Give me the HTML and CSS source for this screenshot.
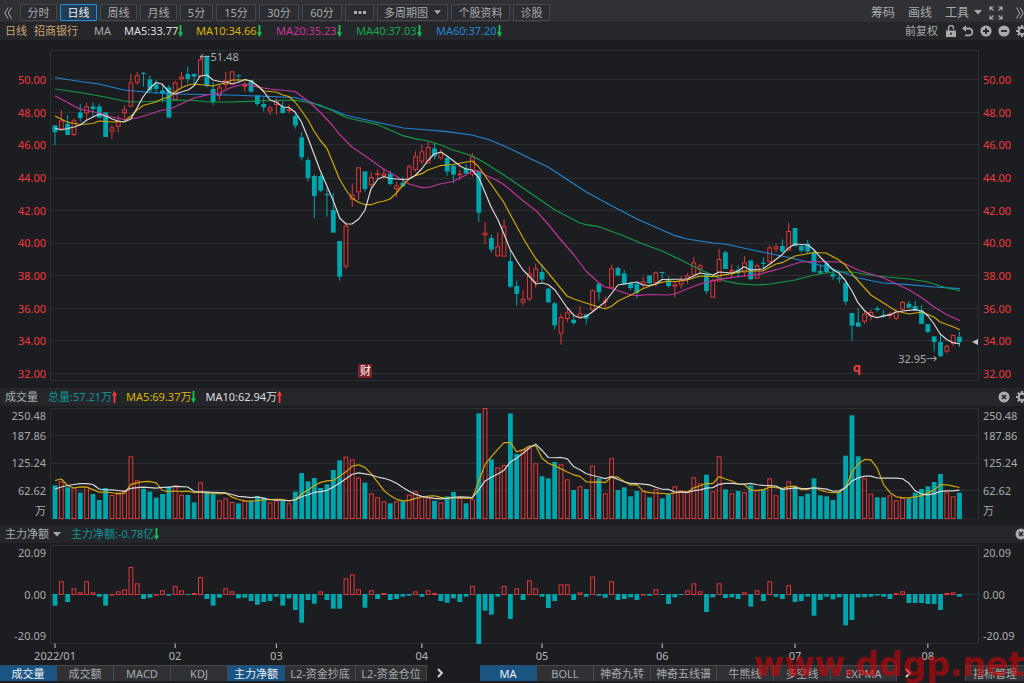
FILE: index.html
```html
<!DOCTYPE html>
<html lang="zh-CN">
<head>
<meta charset="utf-8">
<meta name="viewport" content="width=device-width, initial-scale=1">
<title>招商银行 日线</title>
<link rel="stylesheet" href="styles.css">
</head>
<body>
<svg class="defs" width="0" height="0" aria-hidden="true">
  <symbol id="up" viewBox="0 0 5 12"><path d="M2.5 0L5 4.5H3.4V12H1.6V4.500H0z" fill="#ff3b3b"/></symbol>
  <symbol id="down" viewBox="0 0 5 12"><path d="M2.500 12L5 7.500H3.400V0H1.600V7.500H0z" fill="#12c850"/></symbol>
  <symbol id="caret" viewBox="0 0 8 5"><path d="M0 0h8L4 4.500z" fill="currentColor"/></symbol>
  <symbol id="gear" viewBox="0 0 12 12"><circle cx="6" cy="6" r="3.300" fill="none" stroke="currentColor" stroke-width="2.200"/><path d="M6 0v2.500M6 9.500V12M0 6h2.500M9.500 6H12M1.800 1.800l1.700 1.700M8.500 8.500l1.700 1.700M10.200 1.800L8.500 3.500M3.500 8.500l-1.700 1.700" stroke="currentColor" stroke-width="2.200"/></symbol>
  <symbol id="close" viewBox="0 0 12 12"><circle cx="6" cy="6" r="5.500" fill="currentColor"/><path d="M4 4l4 4M8 4L4 8" stroke="#25262a" stroke-width="1.700"/></symbol>
</svg>

<header class="toolbar">
  <button class="bare" aria-label="收起"><svg width="8" height="12" viewBox="0 0 8 12"><path d="M4 .5L.8 6 4 11.500M7.500 .5L4.300 6l3.200 5.500" fill="none" stroke="currentColor"/></svg></button>
  <nav class="periods">
    <button>分时</button><button class="on">日线</button><button>周线</button><button>月线</button><button class="short">5分</button><button class="mid">15分</button><button class="mid">30分</button><button class="mid">60分</button><button class="dots" aria-label="更多"><svg width="12" height="3" viewBox="0 0 12 3"><path d="M0 0h3v3H0zM4.500 0h3v3h-3zM9 0h3v3H9z" fill="currentColor"/></svg></button><button class="multi" aria-haspopup="true">多周期图<svg width="7" height="5"><use href="#caret"/></svg></button><button class="info">个股资料</button><button>诊股</button>
  </nav>
  <div class="tools">
    <button class="bare">筹码</button><button class="bare">画线</button><button class="bare" aria-haspopup="true">工具<svg class="after" width="8" height="5"><use href="#caret"/></svg></button>
    <button class="bare expand" aria-label="全屏"><svg width="14" height="14" viewBox="0 0 14 14"><path d="M1 4.500V1h3.500M9.500 1H13v3.500M13 9.500V13H9.500M4.500 13H1V9.500M1 1l3.500 3.500M13 1L9.500 4.500M13 13L9.500 9.500M1 13l3.500-3.500" fill="none" stroke="currentColor" stroke-width="1.200"/></svg></button>
    <button class="bare" aria-label="展开"><svg width="8" height="12" viewBox="0 0 8 12"><path d="M.5 .5L3.700 6 .5 11.500M4 .5L7.200 6 4 11.500" fill="none" stroke="currentColor"/></svg></button>
  </div>
</header>

<section class="bar quote">
  <span class="tan">日线</span><span class="tan name">招商银行</span><span class="malabel">MA</span>
  <span class="ma first white">MA5:33.77<svg width="5" height="12"><use href="#down"/></svg></span>
  <span class="ma yellow">MA10:34.66<svg width="5" height="12"><use href="#down"/></svg></span>
  <span class="ma pink">MA20:35.23<svg width="5" height="12"><use href="#down"/></svg></span>
  <span class="ma green">MA40:37.03<svg width="5" height="12"><use href="#down"/></svg></span>
  <span class="ma blue">MA60:37.20<svg width="5" height="12"><use href="#down"/></svg></span>
  <div class="icons quote-icons">
    <button class="bare small">前复权</button>
    <button class="bare" aria-label="锁定"><svg width="10" height="12" viewBox="0 0 10 12"><path d="M2.500 6V3a2.500 2.500 0 0 1 5 0v1.200" fill="none" stroke="currentColor" stroke-width="1.400"/><path d="M0 5.500h10V12H0z" fill="currentColor"/><path d="M4.300 7.500h1.400v2.500H4.300z" fill="#25262a"/></svg></button>
    <button class="bare" aria-label="撤销"><svg width="12" height="12" viewBox="0 0 12 12"><path d="M2 3.500h5a3.300 3.300 0 0 1 0 6.800H3" fill="none" stroke="currentColor" stroke-width="1.800"/><path d="M0 3.500L4 .3v6.400z" fill="currentColor"/></svg></button>
    <button class="bare" aria-label="放大"><svg width="12" height="12" viewBox="0 0 12 12"><circle cx="6" cy="6" r="5.600" fill="currentColor"/><path d="M3 6h6M6 3v6" stroke="#25262a" stroke-width="1.800"/></svg></button>
    <button class="bare" aria-label="缩小"><svg width="12" height="12" viewBox="0 0 12 12"><circle cx="6" cy="6" r="5.600" fill="currentColor"/><path d="M3 6h6" stroke="#25262a" stroke-width="1.800"/></svg></button>
    <button class="bare" aria-label="设置"><svg width="12" height="12"><use href="#gear"/></svg></button>
  </div>
</section>

<section class="pane price">
  <div class="scale red"><span>50.00</span><span>48.00</span><span>46.00</span><span>44.00</span><span>42.00</span><span>40.00</span><span>38.00</span><span>36.00</span><span>34.00</span><span>32.00</span></div>
  <div class="plot">
    <svg id="price" viewBox="50 40 929 348" preserveAspectRatio="none"></svg>
    <span class="note high">←51.48</span>
    <span class="note low">32.95→</span>
    <span class="note cai">财</span>
    <span class="note q">q</span>
  </div>
  <div class="scale red right"><span>50.00</span><span>48.00</span><span>46.00</span><span>44.00</span><span>42.00</span><span>40.00</span><span>38.00</span><span>36.00</span><span>34.00</span><span>32.00</span></div>
</section>

<section class="bar volume-bar">
  <span>成交量</span>
  <span class="teal">总量:57.21万<svg width="5" height="12"><use href="#up"/></svg></span>
  <span class="yellow">MA5:69.37万<svg width="5" height="12"><use href="#down"/></svg></span>
  <span class="white">MA10:62.94万<svg width="5" height="12"><use href="#up"/></svg></span>
  <div class="icons"><button class="bare" aria-label="关闭"><svg width="12" height="12"><use href="#close"/></svg></button><button class="bare" aria-label="设置"><svg width="12" height="12"><use href="#gear"/></svg></button></div>
</section>

<section class="pane volume">
  <div class="scale"><span>250.48</span><span>187.86</span><span>125.24</span><span>62.62</span><span>万</span></div>
  <div class="plot"><svg id="volume" viewBox="50 406 929 119" preserveAspectRatio="none"></svg></div>
  <div class="scale right"><span>250.48</span><span>187.86</span><span>125.24</span><span>62.62</span><span>万</span></div>
</section>

<section class="bar flow-bar">
  <label class="pick"><select aria-label="指标"><option>主力净额</option></select><svg width="8" height="5"><use href="#caret"/></svg></label>
  <span class="teal">主力净额:-0.78亿<svg width="5" height="12"><use href="#down"/></svg></span>
  <div class="icons"><button class="bare" aria-label="关闭"><svg width="12" height="12"><use href="#close"/></svg></button></div>
</section>

<section class="pane flow">
  <div class="scale"><span>20.09</span><span>0.00</span><span>-20.09</span></div>
  <div class="plot"><svg id="flow" viewBox="50 543 929 105" preserveAspectRatio="none"></svg></div>
  <div class="scale right"><span>20.09</span><span>0.00</span><span>-20.09</span></div>
</section>

<div class="months"><div class="plot" id="months"></div></div>

<footer class="tabs">
  <button class="on">成交量</button><button>成交额</button><button>MACD</button><button>KDJ</button><button class="on">主力净额</button><button class="wide">L2-资金抄底</button><button class="wide">L2-资金仓位</button>
  <button class="more" aria-label="更多指标"><svg width="6" height="10" viewBox="0 0 6 10"><path d="M1 1l3.800 4L1 9" fill="none" stroke="currentColor" stroke-width="2"/></svg></button>
  <button class="on main">MA</button><button>BOLL</button><button>神奇九转</button><button class="five">神奇五线谱</button><button>牛熊线</button><button>多空线</button><button class="five">EXPMA</button>
  <button class="more narrow" aria-label="更多主图指标"><svg width="6" height="10" viewBox="0 0 6 10"><path d="M1 1l3.800 4L1 9" fill="none" stroke="currentColor" stroke-width="2"/></svg></button>
  <button class="manage">指标管理</button>
</footer>
<div class="watermark">www.ddgp.net</div>
<script src="chart.js"></script>
</body>
</html>
```
FILE: styles.css
```css
* { box-sizing: border-box; }
body {
  margin: 0;
  min-height: 100vh;
  display: flex;
  flex-direction: column;
  position: relative;
  overflow: hidden;
  background: #1c1d20;
  color: #a9aaac;
  font: 11px/16px "Noto Sans", "Noto Sans CJK SC", sans-serif;
}
button, select { font: inherit; color: inherit; margin: 0; white-space: nowrap; }
svg { flex: none; }
.defs { position: absolute; }
.bare { display: flex; align-items: center; border: 0; padding: 0; background: none; }

.toolbar {
  flex: none;
  height: 22px;
  padding: 3px 0 0 4px;
  display: flex;
  align-items: center;
  background: #303135;
  overflow: hidden;
}
.periods { display: flex; gap: 3px; margin-left: 8px; }
.periods button {
  display: flex;
  align-items: center;
  justify-content: center;
  gap: 6px;
  width: 37px;
  height: 17px;
  padding: 0;
  border: 1px solid #47484c;
  border-radius: 1px;
  background: #2c2d31;
  line-height: 15px;
}
.periods .short { width: 33px; }
.periods .mid { width: 40px; }
.periods .dots { width: 29px; }
.periods .multi { width: 71px; }
.periods .info { width: 59px; }
.periods .on { border-color: #2090e8; background: #233c52; color: #f0f0f0; }
.tools {
  margin: 0 0 0 auto;
  display: flex;
  gap: 13px;
  font-size: 12px;
}
.after { margin-left: 5px; }
.expand { margin-left: -6px; }

.bar {
  flex: none;
  height: 18px;
  display: flex;
  align-items: center;
  background: #25262a;
  padding-left: 5px;
  overflow: hidden;
  white-space: nowrap;
}
.bar span, .ma { display: flex; align-items: center; }
.tan { color: #cfa26c; }
.white { color: #dedede; }
.yellow { color: #dcb400; }
.pink { color: #cc3399; }
.green { color: #16a84c; }
.blue { color: #2088d8; }
.teal { color: #0d969c; }
.name { margin-left: 7px; }
.malabel { width: 30px; margin-left: 16px; }
.ma { width: 80px; }
.ma.first { width: 72px; }
.icons { margin: 0 -4px 0 auto; display: flex; gap: 6px; }
.icons .small { margin-right: 2px; }
.volume-bar { gap: 9px; }
.volume-bar .teal { margin-left: 1px; }
.flow-bar { gap: 10px; }
.flow-bar .icons { margin-right: -3px; }
.pick { display: flex; align-items: center; gap: 4px; }
.pick select { appearance: none; border: 0; padding: 0; background: none; width: 44px; height: 16px; }

.pane { display: grid; grid-template-columns: 50px 1fr 45px; min-height: 0; }
.price { flex: 348 1 0; min-height: 200px; }
.volume { flex: 119 1 0; min-height: 110px; }
.flow { flex: 105 1 0; min-height: 90px; }
.scale {
  display: flex;
  flex-direction: column;
  justify-content: space-between;
  text-align: right;
  padding-right: 4px;
}
.scale.right { text-align: left; padding: 0 0 0 4px; }
.red { color: #f23a3e; }
.price .scale { padding-top: 32px; padding-bottom: 6px; }
.volume .scale {
  display: grid;
  grid-template-columns: 1fr;
  grid-template-rows: 20fr 20fr 34fr 21fr 20fr 4fr;
  align-items: center;
}
.flow .scale { padding-top: 2px; padding-bottom: 4px; }
.plot { position: relative; }
.plot > svg { position: absolute; width: 100%; height: 100%; }
.note { position: absolute; white-space: nowrap; }
.high { left: 16.1%; top: 2.6%; }
.low { left: 91.3%; top: 89.4%; }
.cai {
  left: 33.2%;
  top: 93.2%;
  width: 14px;
  height: 14px;
  line-height: 14px;
  text-align: center;
  color: #fff;
  background: #7c2226;
}
.q { left: 86.4%; top: 91.8%; color: #f03a3a; font-size: 13px; font-weight: 700; }

.months { flex: none; height: 17px; padding: 0 45px 0 50px; color: #b4b5b7; }
.months span { position: absolute; transform: translateX(-50%); }

.tabs {
  flex: none;
  height: 18px;
  padding-bottom: 2px;
  display: flex;
  background: #1c1d20;
}
.tabs button {
  flex: none;
  width: 57px;
  padding: 0;
  border: 0;
  border-top: 1px solid #48494d;
  border-right: 1px solid #48494d;
  background: #303135;
  line-height: 15px;
}
.tabs .wide { width: 71px; }
.tabs .five { width: 66px; }
.tabs .on { background: #1a5482; border-color: #30506a; color: #f0f0f0; }
.tabs .more { width: 26px; border: 0; background: none; color: #d0d0d0; }
.tabs .main { margin-left: 27px; }
.tabs .narrow { width: 22px; }
.tabs .manage { width: 59px; margin-left: auto; border-left: 1px solid #48494d; border-right: 0; }

.watermark {
  position: absolute;
  right: 0;
  bottom: -1px;
  font: 700 33px/38px "DejaVu Sans", sans-serif;
  color: rgba(205, 5, 10, .62);
  pointer-events: none;
}
```
FILE: chart.js
```js
const RED = '#e0383a', TEAL = '#00a6ae', GRID = '#2e2f33';
const FIRST = 55, STEP = 6.325;
const cx = i => FIRST + STEP * i;

// Each block: top offset, then rows "colour high,open/close top,bottom,low" in thirds of a unit.
const blocks = [
[50, 'T226,226,247,285 R180,211,238,238 T195,221,255,255 R205,211,255,258 T163,187,204,215 R158,169,190,213 T157,169,177,200 T160,169,203,205 T187,187,261,261 R225,232,245,266 R196,213,230,247 R166,178,190,205 R71,97,170,170 R66,76,98,104 T66,69,72,110 T77,88,122,128 T90,103,117,131 T105,121,130,157 T105,112,203,203 R92,97,150,150 R66,80,88,117 T50,72,87,100 T70,72,80,106 R17,28,82,82 T17,17,106,112 T96,117,156,165 R105,112,138,150 R66,91,105,117 R62,64,103,103 T73,76,79,97'],
[70, 'R36,44,50,64 T30,30,65,68 T76,76,102,108 T84,102,112,125 R107,112,124,135 R83,91,105,133 T95,110,129,131 R104,118,123,130 T125,138,167,176 T187,202,262,272 T262,270,324,334 T313,318,378,444 T312,318,362,366 T355,372,376,440 T370,420,488,488 T513,513,620,632 R457,467,590,596 R340,374,389,411 R292,292,367,390 T304,304,357,365 R308,321,346,356 R299,310,313,327 R295,310,318,328 T302,311,342,347 R335,346,357,381 T320,338,349,351 R284,289,326,330 R244,259,300,305 R225,244,275,283 R214,231,281,281 T218,235,259,268 R238,247,265,270 T258,264,305,317 T283,287,314,340 R299,311,314,330 T282,294,311,311 R249,259,314,320 T304,304,428,455 R456,488,496,522'],
[150, 'T254,264,299,308 R248,289,319,321 R208,229,320,320 T298,333,410,414 T392,408,432,467 R420,447,458,467 R349,370,448,452 R341,355,396,413 T342,366,389,400 T414,416,457,459 T456,460,526,538 R491,501,551,584 R474,487,507,516 T496,509,519,524 R468,490,502,502 T492,493,506,524 R418,421,481,487 T397,401,427,452 R440,451,456,474 R343,355,415,415 T350,354,377,378 T360,370,404,404 T395,399,414,420 T397,401,429,445 R381,394,404,414 T376,376,400,402 R364,367,399,410 T365,366,369,386 T380,391,408,413 R398,403,410,443 R378,388,404,416 R369,377,389,401 R321,337,376,376 R341,346,358,370 T372,373,423,432 R387,390,443,444 R297,327,395,395 T302,307,357,357'],
[210, 'R163,180,183,206 T165,179,189,203 R138,157,188,200 T149,152,208,210 R161,166,206,206 T142,158,162,178 R106,112,157,161 R101,109,118,126 T88,108,125,128 R38,63,121,124 T54,54,109,109 T102,108,122,128 T90,101,125,130 T118,126,185,189 T162,183,190,191 T155,160,186,190 T180,192,200,209 T187,203,208,219 T210,218,275,285 T309,309,347,392 T294,337,350,350 R302,311,335,342 R299,306,319,331 T288,295,300,305 T300,314,318,323 R305,312,318,326 R297,305,326,330 R273,276,299,302 T273,281,293,295 T272,288,302,302 T285,302,342,342 T342,342,366,369 T379,379,396,424 T375,396,439,441 R404,408,425,430 R374,375,401,409 T366,380,397,410']
];
const candles = blocks.flatMap(([top, rows]) => rows.split(' ').map(r => ({
  up: r[0] === 'R', y: r.slice(1).split(',').map(v => top + v / 3)
})));

const averages = {
'#1f86d6': '55,77.5 80,81.5 99,84 124,90 150,92.5 175,94 230,95 295,97.5 308,101 320,106 333,110 345,115 371,121 390,125 403,128 422,129.5 447,131.7 472,135 490,140 513,150 529,158 548,167 586,191.7 612,206 637,219 675,235.7 687,239 713,243 725,244 757,251 782,256 808,262 833,269 858,278 883,283 909,284.7 934,287 960,288.7',
'#149a48': '55,89 80,92.5 105,97 124,101 135,102 150,101.5 175,100 194,100.5 210,102 230,102 258,101 295,100 320,105 333,111 345,117 352,119 378,124.7 403,135.7 415,138.7 428,141 441,145 453,150 472,155.7 485,163 504,175 523,188 555,210 580,223 586,224.7 599,226.7 624,236 643,244 662,251 681,260 700,269.7 713,275 725,281 738,283.7 757,285 770,284 795,280 814,275 833,272 852,272 877,276 909,279 928,282 940,286 960,291',
'#c2349b': '55,96 61,99 74,106 80,109 87,110.5 99,113 112,117 124,119.5 137,118 150,114 162,110 169,109.5 181,104 194,98 207,95 220,93 232,87 245,84 258,87 270,89 295,91.5 308,101 320,112 333,126 339,134 352,147 371,160 384,169.5 396,176 409,184 422,187.7 428,187.5 440,184 453,181.5 466,175 472,171 478,170.7 485,174.7 498,181 504,184.7 523,200.7 536,210.7 548,224 561,240 574,255 586,271 599,283 605,287 612,288.7 631,295 637,295.7 649,294.5 668,295 675,294 687,289 700,284 713,280.7 730,277.7 744,276 757,274.7 776,269.7 789,265.7 801,262 814,261.5 839,262 845,263.7 858,270 883,277.7 909,289.7 922,298 934,307 947,314.7 960,320.7',
'#cfa80a': '55,116 61,119 67,122 80,124.5 93,123.5 99,121 112,122 124,121.5 131,116 137,110 143,105.5 156,102 162,99 169,97 175,92 181,88 188,85 194,84 213,86 220,84 226,83 232,80 245,80 251,81 264,91 276,92 283,95 289,96.5 295,102 301,110 308,120 314,131 320,140 327,148.5 333,163 339,178 346,190 352,198 358,202 365,204.7 371,204.7 377,202.5 384,201 390,199 396,193.5 403,185 409,179 415,175.7 422,173.7 428,170 440,165.7 453,164.5 472,161 478,166 485,175.7 498,194 504,202.7 510,214 523,237.7 529,248 536,259 548,272.7 567,296 574,299 586,303 605,309 612,306 618,301 631,295 643,288.7 656,283.7 668,281 675,281.7 687,280 700,276 713,276.7 732,273.7 744,271 763,271 776,264 782,262.7 795,256 814,252.5 826,253 839,260 845,264.7 852,274 871,295 896,311 909,314 922,312 934,317 940,322 953,326.7 960,329.7',
'#d8d8d8': '55,128 61,130 74,127 80,125 87,120 93,117 99,114 106,116 112,119 118,121 124,122 131,119 137,108 143,97 150,88 156,82.5 162,84 169,92 175,94 181,92 188,90 194,86 200,76 207,75 213,80 220,81.5 226,82 232,84 239,82 245,79.5 251,81 258,86 264,92 270,100 276,102 283,107 289,107.5 295,112 301,121 308,138 320,170 333,200 339.7,218 346,224 352,224 358.7,219 365,210 371,189 378,179 384,176.5 390,178.5 403,179.5 409,179 415,175.5 422,168.5 428,160.5 434,154 441,152 447,156 453,160.5 460,166 466,169 472,170 479,178 491,206.7 498,220 504,234 510,249 517,261 523,270 529,276 536,284 542,283 548,284.5 555,290 567,307.5 574,315.5 580,318 586,316.5 593,311.5 605,302 618,285 637,282 643,285 649,285.5 656,284 662,279.5 687,279 700,273 713,275 719,272 732,273 738,271 744,266.7 751,270 763,269 770,264 782,254.7 789,247.7 795,244 808,245 814,249.7 820,257 833,269.7 839,273 845,280 852,291 858,302.7 864,310 871,316 877,317.7 890,314.7 896,312 903,311 915,309.7 922,311 928,316 934,324 940,333.7 947,339.7 953,342.7 960,344'
};

const volume = '301 289 307 308 323 305 327 345 309 330 322 316 214 286 311 320 338 327 304 301 329 330 352 292 320 325 346 340 351 355 347 348 334 337 352 346 348 355 320 264 289 279 309 298 255 226 215 223 278 293 325 337 349 355 349 349 329 319 334 334 347 352 334 321 339 355 343 85 69 223 247 240 85 207 194 190 235 274 280 231 238 283 315 304 312 242 280 325 220 315 307 334 318 319 337 312 340 327 304 316 319 277 295 269 319 214 313 325 318 322 301 316 313 280 331 312 289 305 334 326 280 331 334 345 320 212 91 214 280 326 337 337 331 346 339 340 323 312 304 291 267 322 334 323'.split(' ').map(v => 385 + v / 3);

const flow = '242 169 231 190 202 169 202 215 242 207 199 193 126 175 222 218 207 196 212 183 196 209 204 156 222 242 218 190 199 220 218 228 239 231 228 215 242 220 255 293 225 236 199 225 251 251 160 148 193 248 196 222 204 225 222 215 212 199 215 196 204 228 233 220 231 215 183 357 257 269 215 183 282 190 225 166 190 215 249 228 178 178 225 202 215 155 212 218 169 225 222 217 225 207 212 193 209 237 217 209 196 175 199 261 217 175 219 217 222 202 245 196 228 169 215 222 181 231 228 215 272 225 215 223 217 301 285 217 217 215 212 215 222 204 199 234 234 234 237 237 255 204 202 215'.split(' ').map(v => 525 + v / 3);

const line = (x1, y1, x2, y2, c) => `<path d="M${x1} ${y1}L${x2} ${y2}" stroke="${c}"/>`;
const poly = (pts, c) => `<polyline points="${pts}" fill="none" stroke="${c}" stroke-width="1.2" stroke-linejoin="round"/>`;
const frame = (y, h) => `<rect x="50.5" y="${y}" width="928" height="${h}" fill="none" stroke="${GRID}"/>`;
const bar = (x, top, bottom, up) => up
  ? `<rect x="${x - 1.9}" y="${top + .5}" width="3.800" height="${Math.max(.5, bottom - top - 1)}" fill="none" stroke="${RED}"/>`
  : `<rect x="${x - 2.4}" y="${top}" width="4.800" height="${Math.max(1, bottom - top)}" fill="${TEAL}"/>`;

let out = frame(50.5, 330);
for (const y of [79.5, 112.5, 144.5, 178.5, 210.5, 243.5, 275.5, 308.5, 340.5, 373.5]) out += line(50, y, 979, y, GRID);
candles.forEach(({ up, y: [h, t, b, l] }, i) => {
  const x = cx(i), c = up ? RED : TEAL;
  out += line(x, h, x, t, c) + line(x, b, x, l, c) + bar(x, t, b, up);
});
for (const c in averages) out += poly(averages[c], c);
out += '<path d="M972 342l6-3v6z" fill="#c4c4c4"/>';
document.getElementById('price').innerHTML = out;

const mean = n => volume.map((_, i) => {
  const part = volume.slice(Math.max(0, i - n + 1), i + 1);
  return `${cx(i)},${part.reduce((a, b) => a + b) / part.length}`;
});
out = frame(408.5, 110.5);
for (const y of [435.5, 463.5, 490.5]) out += line(50, y, 979, y, GRID);
volume.forEach((y, i) => { out += bar(cx(i), y, 519, candles[i].up); });
const ma5 = mean(5), ma10 = mean(10);
['55,480.5', '61.3,479', '67.6,485.500', '74,488'].forEach((p, i) => { ma5[i] = p; });
['55,489', '61.3,487', '67.6,485.500', '74,484.500', '80.300,483.700', '86.600,483.700', '93,484.500', '99,489', '105.600,490'].forEach((p, i) => { ma10[i] = p; });
out += poly(ma5.join(' '), '#cfa80a') + poly(ma10.join(' '), '#d8d8d8');
document.getElementById('volume').innerHTML = out;

const zero = 594.5;
out = frame(545.5, 98) + line(50, zero, 979, zero, GRID);
flow.forEach((y, i) => {
  const up = y < zero - .1;
  out += bar(cx(i), up ? y : zero - .5, up ? zero + .5 : y, up);
});
const months = [[0, '2022/01'], [19, '02'], [35, '03'], [58, '04'], [77, '05'], [96, '06'], [117, '07'], [138, '08']];
months.forEach(([i]) => { out += line(cx(i), 643.5, cx(i), 648, '#c8c8c8'); });
document.getElementById('flow').innerHTML = out;
document.getElementById('months').innerHTML = months.map(([i, t]) =>
  `<span style="left:${((cx(i) - 50) / 9.29).toFixed(2)}%">${t}</span>`).join('');
```
